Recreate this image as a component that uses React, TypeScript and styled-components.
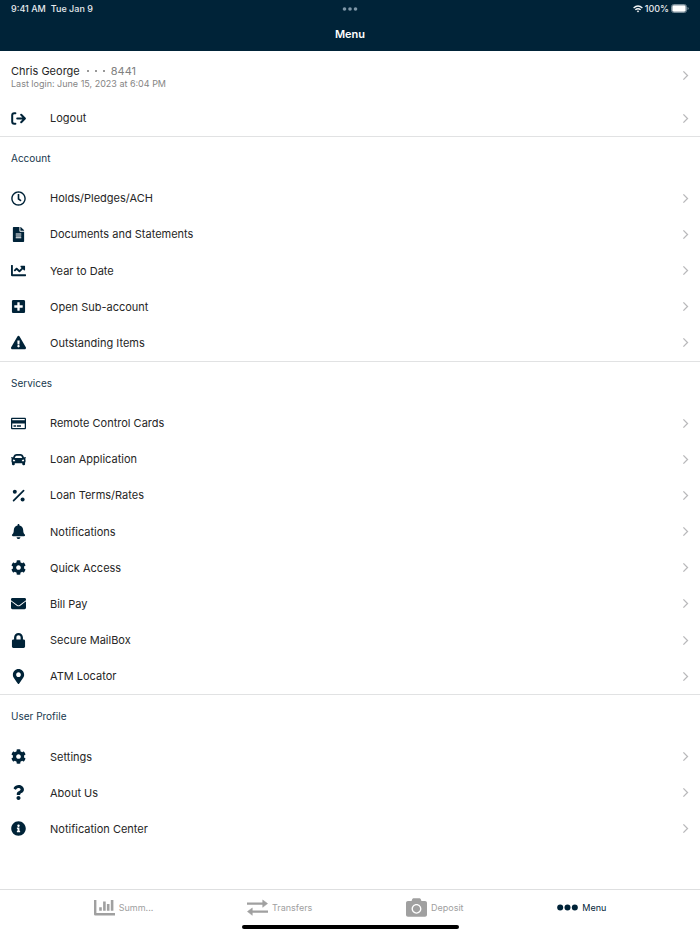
import React, { useState } from "react";
import styled, { createGlobalStyle } from "styled-components";
import {
  FaRegClock, FaFileAlt, FaChartLine, FaPlusSquare, FaExclamationTriangle, FaRegCreditCard,
  FaCar, FaBell, FaCog, FaEnvelope, FaLock, FaMapMarkerAlt, FaQuestion,
  FaInfoCircle, FaCamera,
} from "react-icons/fa";

const navy = "#002338";

const GlobalStyle = createGlobalStyle`
  * { box-sizing: border-box; }
  body { margin: 0; background: #fff; color: #262626; font-family: Inter, "Liberation Sans", sans-serif; }
  button { font: inherit; color: inherit; background: none; border: 0; padding: 0; cursor: pointer; }
`;

const Page = styled.div`
  display: flex;
  flex-direction: column;
  min-height: 100vh;
`;

const Header = styled.header`
  background: ${navy};
  color: #fff;
  padding-bottom: 8px;
`;

const StatusBar = styled.div`
  display: grid;
  grid-template-columns: 1fr auto 1fr;
  align-items: center;
  height: 17px;
  padding: 0 11px;
  font-size: 9px;
  font-weight: 500;
  color: #e6eaed;
`;

const Clock = styled.div`
  display: flex;
  gap: 5px;
`;

const Device = styled.div`
  display: flex;
  align-items: center;
  justify-content: flex-end;
  gap: 2px;
`;

const Title = styled.h1`
  margin: 0;
  font-size: 11px;
  font-weight: 600;
  line-height: 18px;
  padding-top: 8px;
  text-align: center;
`;

const Main = styled.main`
  flex: 1 0 auto;
  display: flex;
  flex-direction: column;
  padding-bottom: 42px;
`;

const Section = styled.section<{ $rows: number }>`
  flex: ${(p) => p.$rows} 0 auto;
  display: flex;
  flex-direction: column;

  & + & { border-top: 1px solid #e1e2e3; }
`;

const SectionTitle = styled.h2`
  margin: 0;
  padding: 0 11px;
  font-size: 10px;
  font-weight: 400;
  line-height: 43px;
  color: #16374d;
`;

const Row = styled.button`
  flex: 1 0 36px;
  display: flex;
  align-items: center;
  width: 100%;
  padding: 0 11px;
  font-size: 11px;
  text-align: left;
`;

const RowIcon = styled.span`
  display: flex;
  justify-content: center;
  width: 15px;
  margin-right: 24px;
  color: ${navy};
  font-size: 15px;
`;

const RowLabel = styled.span`
  flex: 1;
`;

const UserRow = styled(Row)`
  flex: 0 0 49px;
`;

const UserInfo = styled.span`
  flex: 1;
  display: flex;
  flex-direction: column;
  padding-top: 2px;
`;

const UserName = styled.span`
  display: flex;
  align-items: center;
  gap: 5px;
  font-size: 11px;
  line-height: 14px;
`;

const Muted = styled.span`
  display: flex;
  align-items: center;
  gap: 6px;
  color: #808080;
`;

const LastLogin = styled.span`
  font-size: 9px;
  line-height: 11px;
  color: #858585;
`;

const TabBar = styled.nav`
  position: sticky;
  bottom: 0;
  background: #fff;
  border-top: 1px solid #dedfe0;
  padding-bottom: 5px;
`;

const Tabs = styled.div`
  display: flex;
  justify-content: space-evenly;
  height: 35px;
`;

const Tab = styled.button<{ $active: boolean }>`
  display: flex;
  align-items: center;
  gap: 4px;
  font-size: 9px;
  color: ${(p) => (p.$active ? navy : "#a0a0a0")};
`;

const TabLabel = styled.span`
  white-space: nowrap;
`;

const HomeIndicator = styled.div`
  width: 31%;
  min-width: 120px;
  height: 4px;
  margin: 0 auto;
  border-radius: 2px;
  background: #000;
`;

const ChevronIcon = () => (
  <svg width="7" height="11" viewBox="0 0 7 11" fill="none" stroke="#b9b9bb" strokeWidth="1.3" aria-hidden="true">
    <path d="M1.4 1.4 5.5 5.5 1.4 9.6" />
  </svg>
);

const MultitaskDots = () => (
  <svg width="16" height="4" viewBox="0 0 16 4" fill="#7e97a8" aria-hidden="true">
    <circle cx="2.5" cy="2" r="1.8" /><circle cx="8" cy="2" r="1.8" /><circle cx="13.5" cy="2" r="1.8" />
  </svg>
);

const MaskDots = () => (
  <svg width="20" height="4" viewBox="0 0 20 4" fill="#777" aria-hidden="true">
    <circle cx="3" cy="2" r="1" /><circle cx="11" cy="2" r="1" /><circle cx="19" cy="2" r="1" />
  </svg>
);

const WifiIcon = () => (
  <svg width="10" height="8" viewBox="0 0 10 8" fill="none" stroke="#f4f6f7" strokeWidth="1.4" aria-hidden="true">
    <path d="M.6 3Q5-1 9.4 3M2.3 4.8q2.7-2.3 5.4 0" />
    <path d="M3.7 6.1Q5 5.1 6.3 6.1L5 7.5Z" fill="#f4f6f7" stroke="none" />
  </svg>
);

const BatteryIcon = () => (
  <svg width="18" height="9" viewBox="0 0 18 9" aria-hidden="true">
    <rect x=".5" y=".5" width="15" height="8" rx="2.3" fill="none" stroke="#778c99" />
    <rect x="1.3" y="1.3" width="13.4" height="6.4" rx="1.4" fill="#fff" />
    <path d="M16.5 3.1q1.2.3 1.2 1.4t-1.2 1.4Z" fill="#778c99" />
  </svg>
);

const LogoutIcon = () => (
  <svg width="15" height="15" viewBox="0 0 15 15" fill="none" stroke="currentColor" strokeWidth="2" strokeLinecap="round" strokeLinejoin="round" aria-hidden="true">
    <path d="M4.4 2.2H3.2Q1.2 2.2 1.2 4.2v6.6q0 2 2 2h1.2" />
    <path d="M6.2 7.5h7.4M10.2 3.8l3.7 3.7-3.7 3.7" />
  </svg>
);

const PercentIcon = () => (
  <svg width="15" height="15" viewBox="0 0 15 15" fill="currentColor" aria-hidden="true">
    <circle cx="3.8" cy="3.8" r="2" />
    <circle cx="11.6" cy="11.6" r="2" />
    <path d="M2.6 12.6 12.6 2.6" stroke="currentColor" strokeWidth="1.7" strokeLinecap="round" />
  </svg>
);

const SummaryIcon = () => (
  <svg width="21" height="17" viewBox="0 0 21 17" fill="none" stroke="currentColor" strokeWidth="2.4" aria-hidden="true">
    <path d="M1.2 1v14.3H21" strokeLinejoin="round" />
    <path d="M6.5 11.7V8.2M10.4 11.7V2.6M14.2 11.7V5.1M18.1 11.7V1" strokeWidth="2.6" />
  </svg>
);

const TransfersIcon = () => (
  <svg width="21" height="17" viewBox="0 0 21 17" aria-hidden="true">
    <path d="M0 4.6h16M5 12.6h16" fill="none" stroke="currentColor" strokeWidth="2.4" />
    <path d="M15.7.9 20.6 4.6l-4.9 3.7ZM5.3 8.9.4 12.6l4.9 3.7Z" fill="currentColor" stroke="currentColor" strokeWidth=".5" strokeLinejoin="round" />
  </svg>
);

const MenuIcon = () => (
  <svg width="21" height="7" viewBox="0 0 21 7" fill="currentColor" aria-hidden="true">
    <circle cx="3.2" cy="3.5" r="3" /><circle cx="10.5" cy="3.5" r="3" /><circle cx="17.8" cy="3.5" r="3" />
  </svg>
);

type Icon = React.ComponentType;
type Item = [string, Icon];

const sections: { title: string; items: Item[] }[] = [
  {
    title: "Account",
    items: [
      ["Holds/Pledges/ACH", FaRegClock],
      ["Documents and Statements", FaFileAlt],
      ["Year to Date", FaChartLine],
      ["Open Sub-account", FaPlusSquare],
      ["Outstanding Items", FaExclamationTriangle],
    ],
  },
  {
    title: "Services",
    items: [
      ["Remote Control Cards", FaRegCreditCard],
      ["Loan Application", FaCar],
      ["Loan Terms/Rates", PercentIcon],
      ["Notifications", FaBell],
      ["Quick Access", FaCog],
      ["Bill Pay", FaEnvelope],
      ["Secure MailBox", FaLock],
      ["ATM Locator", FaMapMarkerAlt],
    ],
  },
  {
    title: "User Profile",
    items: [
      ["Settings", FaCog],
      ["About Us", FaQuestion],
      ["Notification Center", FaInfoCircle],
    ],
  },
];

const tabs = [
  { label: "Summ...", icon: <SummaryIcon /> },
  { label: "Transfers", icon: <TransfersIcon /> },
  { label: "Deposit", icon: <FaCamera size={21} aria-hidden="true" /> },
  { label: "Menu", icon: <MenuIcon /> },
];

const MenuRow = ({ label, icon: Glyph }: { label: string; icon: Icon }) => (
  <Row type="button">
    <RowIcon aria-hidden="true"><Glyph /></RowIcon>
    <RowLabel>{label}</RowLabel>
    <ChevronIcon />
  </Row>
);

export default function App() {
  const [active, setActive] = useState("Menu");
  return (
    <Page>
      <GlobalStyle />
      <Header>
        <StatusBar>
          <Clock><span>9:41 AM</span><span>Tue Jan 9</span></Clock>
          <MultitaskDots />
          <Device><WifiIcon /><span>100%</span><BatteryIcon /></Device>
        </StatusBar>
        <Title>Menu</Title>
      </Header>
      <Main>
        <Section $rows={1}>
          <UserRow type="button">
            <UserInfo>
              <UserName>Chris George <Muted><MaskDots />8441</Muted></UserName>
              <LastLogin>Last login: June 15, 2023 at 6:04 PM</LastLogin>
            </UserInfo>
            <ChevronIcon />
          </UserRow>
          <MenuRow label="Logout" icon={LogoutIcon} />
        </Section>
        {sections.map((section) => (
          <Section key={section.title} $rows={section.items.length}>
            <SectionTitle>{section.title}</SectionTitle>
            {section.items.map(([label, icon]) => (
              <MenuRow key={label} label={label} icon={icon} />
            ))}
          </Section>
        ))}
      </Main>
      <TabBar>
        <Tabs>
          {tabs.map((tab) => (
            <Tab key={tab.label} type="button" $active={tab.label === active} onClick={() => setActive(tab.label)}>
              {tab.icon}
              <TabLabel>{tab.label}</TabLabel>
            </Tab>
          ))}
        </Tabs>
        <HomeIndicator />
      </TabBar>
    </Page>
  );
}
